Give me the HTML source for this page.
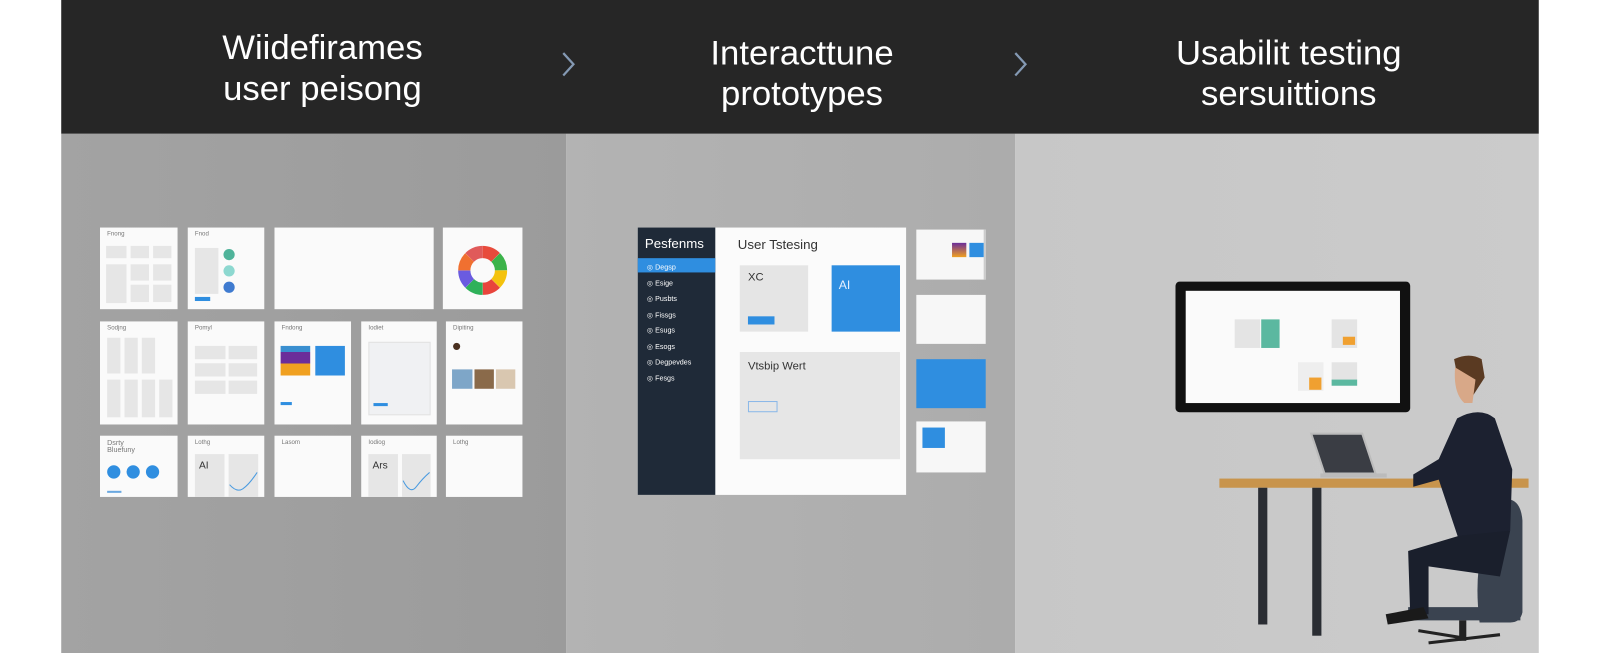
<!DOCTYPE html>
<html><head><meta charset="utf-8"><style>
*{margin:0;padding:0;box-sizing:border-box}
body{width:1600px;height:640px;background:#fff;position:relative;overflow:hidden;font-family:"Liberation Sans",sans-serif}
#w{position:absolute;left:0;top:0;width:1568px;height:628px;transform:scale(1.0204);transform-origin:0 0}
.a{position:absolute}
.hdr{left:60px;top:0;width:1448px;height:131px;background:#262626}
.ht{color:#fff;font-size:34px;line-height:40px;text-align:center;width:320px}
.card{background:#fafafa;position:absolute}
.g{background:#e6e6e6;position:absolute}
.t{position:absolute;font-size:6px;color:#777}
</style></head><body><div id="w">
<div class="a" style="left:60px;top:131px;width:495px;height:509px;background:linear-gradient(90deg,#a3a3a3,#9b9b9b)"></div>
<div class="a" style="left:555px;top:131px;width:440px;height:509px;background:linear-gradient(90deg,#b3b3b3,#acacac)"></div>
<div class="a" style="left:995px;top:131px;width:513px;height:509px;background:linear-gradient(90deg,#c7c7c7,#cbcbcb)"></div>
<div class="a hdr"></div>
<div class="a ht" style="left:156px;top:27px">Wiidefirames<br>user peisong</div>
<div class="a ht" style="left:626px;top:32px">Interacttune<br>prototypes</div>
<div class="a ht" style="left:1103px;top:32px">Usabilit testing<br>sersuittions</div>
<svg class="a" style="left:549px;top:50px" width="16" height="26"><path d="M3 2 L13 13 L3 24" stroke="#8499b3" stroke-width="2.2" fill="none"/></svg>
<svg class="a" style="left:992px;top:50px" width="16" height="26"><path d="M3 2 L13 13 L3 24" stroke="#8499b3" stroke-width="2.2" fill="none"/></svg>

<div class="card" style="left:98px;top:223px;width:76px;height:80px"><div class="t" style="left:7px;top:4px">Fnong</div>
<div class="g" style="left:6px;top:18px;width:20px;height:12px"></div><div class="g" style="left:30px;top:18px;width:18px;height:12px"></div><div class="g" style="left:52px;top:18px;width:18px;height:12px"></div>
<div class="g" style="left:6px;top:36px;width:20px;height:38px"></div><div class="g" style="left:30px;top:36px;width:18px;height:16px"></div><div class="g" style="left:52px;top:36px;width:18px;height:16px"></div><div class="g" style="left:30px;top:56px;width:18px;height:17px"></div><div class="g" style="left:52px;top:56px;width:18px;height:17px"></div></div>
<div class="card" style="left:184px;top:223px;width:75px;height:80px"><div class="t" style="left:7px;top:4px">Fnod</div>
<div class="g" style="left:7px;top:20px;width:23px;height:45px"></div>
<div class="a" style="left:35px;top:21px;width:11px;height:11px;border-radius:50%;background:#4fb39a"></div>
<div class="a" style="left:35px;top:37px;width:11px;height:11px;border-radius:50%;background:#8dd8d0"></div>
<div class="a" style="left:35px;top:53px;width:11px;height:11px;border-radius:50%;background:#3f7bd0"></div>
<div class="a" style="left:7px;top:68px;width:15px;height:4px;background:#2f8ee0"></div></div>
<div class="card" style="left:269px;top:223px;width:156px;height:80px"></div>
<div class="card" style="left:434px;top:223px;width:78px;height:80px">
<svg class="a" style="left:14px;top:17px" width="50" height="50" viewBox="0 0 50 50">
<g fill="none" stroke-width="12">
<circle cx="25" cy="25" r="18" stroke="#e84b3c" stroke-dasharray="14 100" transform="rotate(-90 25 25)"/>
<circle cx="25" cy="25" r="18" stroke="#3cb34a" stroke-dasharray="14 100" transform="rotate(-45 25 25)"/>
<circle cx="25" cy="25" r="18" stroke="#f4c20d" stroke-dasharray="14 100" transform="rotate(0 25 25)"/>
<circle cx="25" cy="25" r="18" stroke="#e8453c" stroke-dasharray="14 100" transform="rotate(45 25 25)"/>
<circle cx="25" cy="25" r="18" stroke="#2fb15a" stroke-dasharray="14 100" transform="rotate(90 25 25)"/>
<circle cx="25" cy="25" r="18" stroke="#6a5be0" stroke-dasharray="14 100" transform="rotate(135 25 25)"/>
<circle cx="25" cy="25" r="18" stroke="#f07030" stroke-dasharray="14 100" transform="rotate(180 25 25)"/>
<circle cx="25" cy="25" r="18" stroke="#e05a5a" stroke-dasharray="14 100" transform="rotate(225 25 25)"/>
</g></svg></div>
<div class="card" style="left:98px;top:315px;width:76px;height:101px"><div class="t" style="left:7px;top:4px">Sodjng</div>
<div class="g" style="left:7px;top:16px;width:13px;height:35px"></div><div class="g" style="left:24px;top:16px;width:13px;height:35px"></div><div class="g" style="left:41px;top:16px;width:13px;height:35px"></div>
<div class="g" style="left:7px;top:57px;width:13px;height:37px"></div><div class="g" style="left:24px;top:57px;width:13px;height:37px"></div><div class="g" style="left:41px;top:57px;width:13px;height:37px"></div><div class="g" style="left:58px;top:57px;width:13px;height:37px"></div></div>
<div class="card" style="left:184px;top:315px;width:75px;height:101px"><div class="t" style="left:7px;top:4px">Pomyl</div>
<div class="g" style="left:7px;top:24px;width:30px;height:13px"></div><div class="g" style="left:40px;top:24px;width:28px;height:13px"></div>
<div class="g" style="left:7px;top:41px;width:30px;height:13px"></div><div class="g" style="left:40px;top:41px;width:28px;height:13px"></div>
<div class="g" style="left:7px;top:58px;width:30px;height:13px"></div><div class="g" style="left:40px;top:58px;width:28px;height:13px"></div></div>
<div class="card" style="left:269px;top:315px;width:75px;height:101px"><div class="t" style="left:7px;top:4px">Fndong</div>
<div class="a" style="left:6px;top:24px;width:29px;height:29px;background:linear-gradient(180deg,#3a8fd0 0 20%,#6b2d9a 20% 60%,#f0a020 60%)"></div>
<div class="a" style="left:40px;top:24px;width:29px;height:29px;background:#2f8ee0"></div>
<div class="a" style="left:6px;top:79px;width:11px;height:3px;background:#2f8ee0"></div></div>
<div class="card" style="left:354px;top:315px;width:74px;height:101px"><div class="t" style="left:7px;top:4px">Iodiet</div>
<div class="a" style="left:7px;top:20px;width:61px;height:72px;background:#f0f1f3;border:1px solid #e2e2e2"></div>
<div class="a" style="left:12px;top:80px;width:14px;height:3px;background:#2f8ee0"></div></div>
<div class="card" style="left:437px;top:315px;width:75px;height:101px"><div class="t" style="left:7px;top:4px">Dipiting</div>
<div class="a" style="left:7px;top:21px;width:7px;height:7px;border-radius:50%;background:#4a3020"></div>
<div class="a" style="left:6px;top:47px;width:20px;height:19px;background:#7ea6c8"></div>
<div class="a" style="left:28px;top:47px;width:19px;height:19px;background:#8a6a4a"></div>
<div class="a" style="left:49px;top:47px;width:19px;height:19px;background:#d9c7b0"></div></div>
<div class="card" style="left:98px;top:427px;width:76px;height:60px"><div class="t" style="left:7px;top:4px;font-size:7px">Dsrty<br>Bluefuny</div>
<div class="a" style="left:7px;top:29px;width:13px;height:13px;border-radius:50%;background:#2f8ee0"></div>
<div class="a" style="left:26px;top:29px;width:13px;height:13px;border-radius:50%;background:#2f8ee0"></div>
<div class="a" style="left:45px;top:29px;width:13px;height:13px;border-radius:50%;background:#2f8ee0"></div>
<div class="a" style="left:7px;top:54px;width:14px;height:2px;background:#6aa8e0"></div></div>
<div class="card" style="left:184px;top:427px;width:75px;height:60px"><div class="t" style="left:7px;top:4px">Lothg</div>
<div class="g" style="left:7px;top:18px;width:29px;height:42px"></div><div class="g" style="left:40px;top:18px;width:29px;height:42px"></div>
<div class="t" style="left:11px;top:24px;font-size:10px;color:#333">AI</div>
<svg class="a" style="left:40px;top:34px" width="29" height="22"><path d="M1 14 Q8 22 14 18 T28 2" stroke="#4a9be0" fill="none"/></svg></div>
<div class="card" style="left:269px;top:427px;width:75px;height:60px"><div class="t" style="left:7px;top:4px">Lasom</div></div>
<div class="card" style="left:354px;top:427px;width:74px;height:60px"><div class="t" style="left:7px;top:4px">Iodiog</div>
<div class="g" style="left:7px;top:18px;width:29px;height:42px"></div><div class="g" style="left:40px;top:18px;width:28px;height:42px"></div>
<div class="t" style="left:11px;top:24px;font-size:10px;color:#333">Ars</div>
<svg class="a" style="left:40px;top:34px" width="28" height="22"><path d="M1 10 Q8 24 14 16 T27 2" stroke="#4a9be0" fill="none"/></svg></div>
<div class="card" style="left:437px;top:427px;width:75px;height:60px"><div class="t" style="left:7px;top:4px">Lothg</div></div>

<div class="a" style="left:625px;top:223px;width:263px;height:262px;background:#fbfbfb"></div>
<div class="a" style="left:625px;top:223px;width:76px;height:262px;background:#1f2a38"></div>
<div class="a" style="left:632px;top:231px;color:#fff;font-size:13px">Pesfenms</div>
<div class="a" style="left:625px;top:253px;width:76px;height:14px;background:#2f8ee0"></div>
<div class="a" style="left:634px;top:255px;color:#fff;font-size:7px;line-height:15.5px">◎ Degsp<br>◎ Esige<br>◎ Pusbts<br>◎ Fissgs<br>◎ Esugs<br>◎ Esogs<br>◎ Degpevdes<br>◎ Fesgs</div>
<div class="a" style="left:723px;top:232px;color:#333;font-size:13px">User Tstesing</div>
<div class="a" style="left:725px;top:260px;width:67px;height:65px;background:#e5e5e5"></div>
<div class="a" style="left:733px;top:266px;font-size:11px;color:#333">XC</div>
<div class="a" style="left:733px;top:310px;width:26px;height:8px;background:#2f8ee0"></div>
<div class="a" style="left:815px;top:260px;width:67px;height:65px;background:#2f8ee0"></div>
<div class="a" style="left:822px;top:272px;font-size:12px;color:#e6f0ff">AI</div>
<div class="a" style="left:725px;top:345px;width:157px;height:105px;background:#e6e6e6"></div>
<div class="a" style="left:733px;top:353px;font-size:11px;color:#333">Vtsbip Wert</div>
<div class="a" style="left:733px;top:393px;width:29px;height:11px;border:1px solid #8ab8e8"></div>
<div class="a" style="left:898px;top:225px;width:68px;height:49px;background:#f7f7f7;border-right:2px solid #ccc"></div>
<div class="a" style="left:950px;top:238px;width:14px;height:14px;background:#2f8ee0"></div>
<div class="a" style="left:933px;top:238px;width:14px;height:14px;background:linear-gradient(#6b2d9a,#f0a020)"></div>
<div class="a" style="left:898px;top:289px;width:68px;height:48px;background:#f7f7f7"></div>
<div class="a" style="left:898px;top:352px;width:68px;height:48px;background:#2f8ee0"></div>
<div class="a" style="left:898px;top:413px;width:68px;height:50px;background:#f7f7f7"></div>
<div class="a" style="left:904px;top:419px;width:22px;height:20px;background:#2f8ee0"></div>

<div class="a" style="left:1152px;top:276px;width:230px;height:128px;background:#111;border-radius:4px"></div>
<div class="a" style="left:1162px;top:285px;width:210px;height:110px;background:#fafafa"></div>
<div class="a" style="left:1210px;top:313px;width:25px;height:28px;background:#e4e4e4"></div>
<div class="a" style="left:1236px;top:313px;width:18px;height:28px;background:#5bb8a0"></div>
<div class="a" style="left:1305px;top:313px;width:25px;height:28px;background:#e4e4e4"></div>
<div class="a" style="left:1316px;top:330px;width:12px;height:8px;background:#f0a030"></div>
<div class="a" style="left:1272px;top:355px;width:25px;height:28px;background:#eee"></div>
<div class="a" style="left:1283px;top:370px;width:12px;height:12px;background:#f0a030"></div>
<div class="a" style="left:1305px;top:355px;width:25px;height:23px;background:#e4e4e4"></div>
<div class="a" style="left:1305px;top:372px;width:25px;height:6px;background:#5bb8a0"></div>
<svg class="a" style="left:1280px;top:420px" width="90" height="55"><path d="M5 5 L55 5 L68 44 L18 44 Z" fill="#3a3d44" stroke="#bbb" stroke-width="2"/><rect x="14" y="44" width="65" height="4" fill="#bbb"/></svg>
<div class="a" style="left:1195px;top:469px;width:303px;height:9px;background:#c8944c"></div>
<div class="a" style="left:1233px;top:478px;width:9px;height:134px;background:#2a2d33"></div>
<div class="a" style="left:1286px;top:478px;width:9px;height:145px;background:#2a2d33"></div>
<svg class="a" style="left:1340px;top:340px" width="168" height="300">
<path d="M130 150 Q150 145 152 170 L152 260 Q150 270 140 270 L110 270 Q105 230 112 200 Z" fill="#3a4350"/>
<path d="M40 255 L150 255 L150 268 L40 268 Z" fill="#3a4350"/>
<rect x="90" y="268" width="7" height="20" fill="#222"/>
<path d="M60 290 L130 282 M93 285 L50 278" stroke="#222" stroke-width="3"/>
<path d="M85 12 Q100 5 112 12 L115 30 L102 50 L92 48 Z" fill="#5a3a22"/>
<path d="M86 20 Q84 45 95 55 L103 55 L106 32 Z" fill="#d8a888"/>
<path d="M88 70 Q110 58 125 70 L142 120 L140 180 L90 190 L70 130 L45 137 L45 125 L70 110 Z" fill="#1c2130"/>
<path d="M90 185 L140 180 L130 225 L60 215 L60 262 L42 262 L40 200 Z" fill="#1a1f2c"/>
<path d="M18 262 L55 255 L60 266 L20 272 Z" fill="#1a1a1a"/>
</svg>
</div></body></html>
